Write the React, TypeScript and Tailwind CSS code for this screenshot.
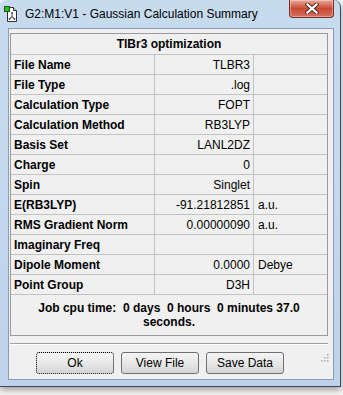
import React from 'react';

const rows: [string, string, string][] = [
  ['File Name', 'TLBR3', ''],
  ['File Type', '.log', ''],
  ['Calculation Type', 'FOPT', ''],
  ['Calculation Method', 'RB3LYP', ''],
  ['Basis Set', 'LANL2DZ', ''],
  ['Charge', '0', ''],
  ['Spin', 'Singlet', ''],
  ['E(RB3LYP)', '-91.21812851', 'a.u.'],
  ['RMS Gradient Norm', '0.00000090', 'a.u.'],
  ['Imaginary Freq', '', ''],
  ['Dipole Moment', '0.0000', 'Debye'],
  ['Point Group', 'D3H', ''],
];

function DocIcon() {
  return (
    <svg width="16" height="18" viewBox="0 0 16 18" className="shrink-0">
      <path d="M4.5 2.5h6l3 3v11h-9z" fill="#fff" stroke="#333" />
      <path d="M10.5 2.5v3h3" fill="#ddd" stroke="#333" />
      <path d="M9 8v3.5M9 11.5l-2.5 2.5M9 11.5l2.5 2.5" stroke="#666" strokeWidth="1.2" fill="none" />
      <circle cx="9" cy="8" r="1" fill="#555" />
      <circle cx="6.5" cy="14" r="1" fill="#555" />
      <circle cx="11.5" cy="14" r="1" fill="#555" />
      <rect x="1.5" y="1.5" width="5" height="5" fill="#22c322" stroke="#135e13" />
    </svg>
  );
}

function CloseButton() {
  return (
    <div className="w-[45px] h-[18px] rounded-b-[4px] border border-t-0 border-[#7a2a20] bg-gradient-to-b from-[#e9a899] via-[#c84a35] to-[#d7705a] flex items-center justify-center shadow-[inset_0_0_0_1px_rgba(255,255,255,0.35)]">
      <svg width="14" height="11" viewBox="0 0 14 11">
        <path d="M2.5 1.5l9 8M11.5 1.5l-9 8" stroke="#4a2a28" strokeWidth="4" strokeLinecap="square" />
        <path d="M2.5 1.5l9 8M11.5 1.5l-9 8" stroke="#fff" strokeWidth="2.2" strokeLinecap="square" />
      </svg>
    </div>
  );
}

function Button({ label, focused }: { label: string; focused?: boolean }) {
  return (
    <div
      className={`w-[78px] h-[22px] rounded-[3px] border flex items-center justify-center text-[12px] text-black bg-gradient-to-b from-[#f4f4f4] via-[#e8e8e8] to-[#d4d4d4] ${
        focused ? 'border-dotted border-black' : 'border-[#707070]'
      }`}
    >
      {label}
    </div>
  );
}

function Grip() {
  return (
    <svg width="10" height="10" viewBox="0 0 10 10" className="self-end mb-[2px]">
      {[
        [8, 2],
        [5, 5],
        [8, 5],
        [2, 8],
        [5, 8],
        [8, 8],
      ].map(([x, y], i) => (
        <rect key={i} x={x} y={y} width="1.5" height="1.5" fill="#a9a9a9" />
      ))}
    </svg>
  );
}

export default function App() {
  return (
    <div className="w-[343px] h-[395px] bg-[#f4f4f4] overflow-hidden" style={{ fontFamily: '"Liberation Sans", Arial, sans-serif' }}>
      <div className="w-[341px] h-[387px] rounded-t-[7px] bg-gradient-to-b from-[#c7dbef] via-[#c3d8ee] to-[#bdd3eb] border-r border-b border-[#3a4a5c] flex flex-col shadow-[0_3px_6px_rgba(0,0,0,0.35)]">
        {/* Title bar */}
        <div className="h-[28px] flex items-start shrink-0">
          <div className="flex items-center h-[28px] pl-[3px] gap-[6px]">
            <DocIcon />
            <span className="text-[12px] text-black">G2:M1:V1 - Gaussian Calculation Summary</span>
          </div>
          <div className="ml-auto mr-[6px]">
            <CloseButton />
          </div>
        </div>

        {/* Client */}
        <div className="ml-[8px] w-[326px] h-[352px] bg-[#f0f0f0] border border-[#8b9bb0] flex flex-col">
          <div className="ml-[1px] mt-[4px] w-[318px] border border-[#9a9a9a] bg-[#f0f0f0]">
            <div className="h-[21px] border-b border-[#c2c2c2] flex items-center justify-center text-[12px] font-bold text-black">
              TlBr3 optimization
            </div>
            {rows.map(([label, value, unit]) => (
              <div key={label} className="h-[20px] border-b border-[#c2c2c2] flex text-[12px] text-black">
                <div className="w-[144px] border-r border-[#c2c2c2] pl-[3px] flex items-center font-bold whitespace-nowrap">
                  {label}
                </div>
                <div className="w-[99px] border-r border-[#c2c2c2] pr-[3px] flex items-center justify-end whitespace-nowrap">
                  {value}
                </div>
                <div className="flex-1 pl-[4px] flex items-center whitespace-nowrap">{unit}</div>
              </div>
            ))}
            <div className="h-[40px] flex flex-col items-center justify-center text-[12px] font-bold leading-[14px] text-black whitespace-pre">
              <span>{'Job cpu time:  0 days  0 hours  0 minutes 37.0'}</span>
              <span>seconds.</span>
            </div>
          </div>

          <div className="ml-[1px] mt-[7px] w-[318px] h-[2px] border-t border-[#a0a0a0] border-b border-b-white" />

          <div className="flex mt-[7px] pl-[27px] pr-[4px]">
            <div className="flex gap-[7px]">
              <Button label="Ok" focused />
              <Button label="View File" />
              <Button label="Save Data" />
            </div>
            <div className="ml-auto">
              <Grip />
            </div>
          </div>
        </div>
      </div>
    </div>
  );
}
